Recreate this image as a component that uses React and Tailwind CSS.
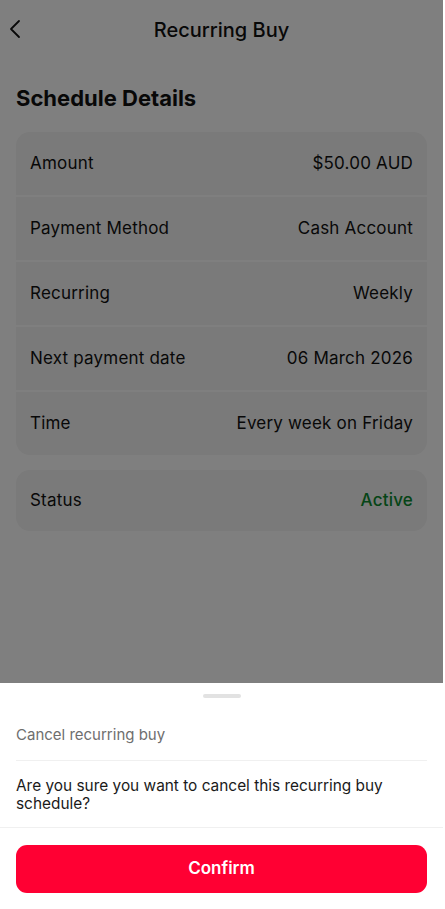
const rows = [
  ['Amount', '$50.00 AUD'],
  ['Payment Method', 'Cash Account'],
  ['Recurring', 'Weekly'],
  ['Next payment date', '06 March 2026'],
  ['Time', 'Every week on Friday'],
]

export default function App() {
  return (
    <div className="relative h-[909px] w-full overflow-hidden bg-white">
      <div className="relative h-full w-[443px] text-[#111] font-['Inter',sans-serif]">
        {/* Header */}
        <div className="relative flex h-[60px] items-center justify-center">
          <svg className="absolute left-[8px] top-[19px]" width="14" height="20" viewBox="0 0 14 20" fill="none">
            <path d="M11 2 L3 10 L11 18" stroke="#111" strokeWidth="1.8" strokeLinecap="round" strokeLinejoin="round" />
          </svg>
          <h1 className="text-[20px] font-medium">Recurring Buy</h1>
        </div>

        <div className="px-4">
          <h2 className="mt-[24px] text-[22px] font-bold leading-[28px]">Schedule Details</h2>

          {/* Details card */}
          <div className="mt-[20px] flex flex-col gap-[2px] overflow-hidden rounded-[14px]">
            {rows.map(([label, value]) => (
              <div key={label} className="flex h-[63px] items-center justify-between bg-[#f4f4f4] px-[14px] text-[17px] tracking-[0.2px]">
                <span>{label}</span>
                <span>{value}</span>
              </div>
            ))}
          </div>

          {/* Status card */}
          <div className="mt-[15px] flex h-[61px] items-center justify-between rounded-[14px] bg-[#f4f4f4] px-[14px] text-[17px] tracking-[0.2px]">
            <span>Status</span>
            <span className="font-medium text-[#0a8a2e]">Active</span>
          </div>
        </div>

        {/* Dim overlay */}
        <div className="absolute inset-0 bg-black/50" />

        {/* Bottom sheet */}
        <div className="absolute inset-x-0 bottom-0 flex h-[226px] flex-col bg-white">
          <div className="mx-auto mt-[11px] h-[4px] w-[38px] rounded-full bg-[#e2e2e2]" />
          <div className="px-4">
            <div className="flex h-[63px] items-center border-b border-[#f0f0f0] pt-[12px] text-[15px] text-[#6e6e6e]">
              Cancel recurring buy
            </div>
            <p className="pt-[16px] pb-[14px] text-[15.4px] leading-[18px] text-[#1a1a1a]">
              Are you sure you want to cancel this recurring buy schedule?
            </p>
          </div>
          <div className="border-t border-[#f0f0f0] px-4 pt-[17px]">
            <button className="flex h-[48px] w-full items-center justify-center rounded-[11px] bg-[#ff0033] text-[17px] font-semibold text-white">
              Confirm
            </button>
          </div>
        </div>
      </div>
    </div>
  )
}
